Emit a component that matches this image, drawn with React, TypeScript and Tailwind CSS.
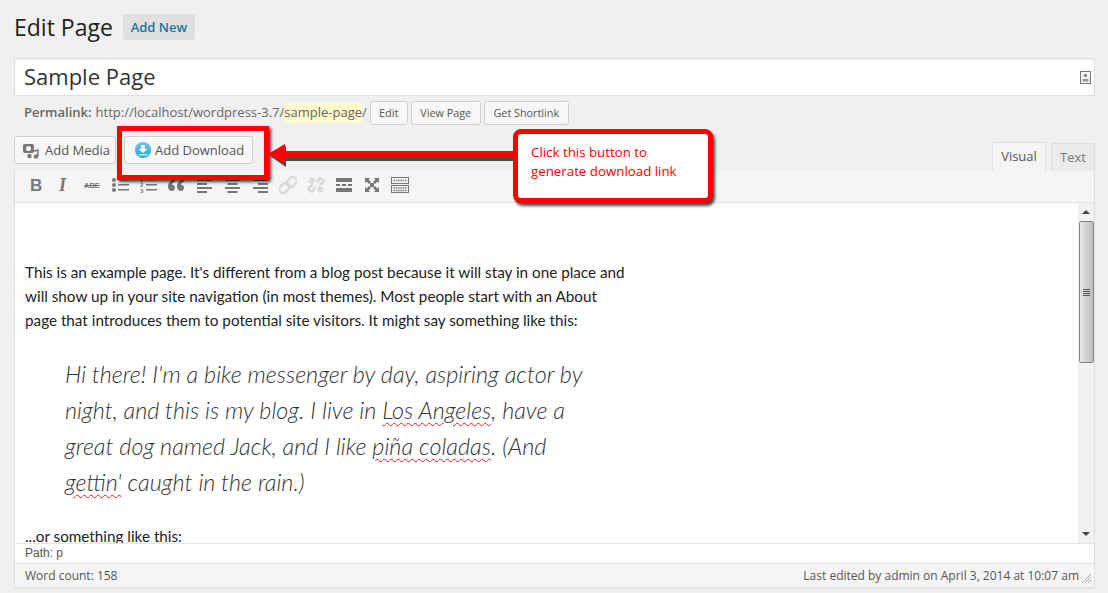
const ui = "font-['Open_Sans',sans-serif]";

function Btn({ children, className = "" }: { children: React.ReactNode; className?: string }) {
  return (
    <div className={`flex items-center border border-[#cfcfcf] rounded-[3px] bg-[#f7f7f7] text-[#555] shadow-[inset_0_1px_0_#fff] ${className}`}>
      {children}
    </div>
  );
}

function Ico({ children, w = 18 }: { children: React.ReactNode; w?: number }) {
  return (
    <svg width={w} height="18" viewBox={`0 0 ${w} 18`} className="shrink-0">
      {children}
    </svg>
  );
}

function Lines({ kind }: { kind: "left" | "center" | "right" }) {
  const r = (y: number, w: number) => {
    const x = kind === "left" ? 2 : kind === "center" ? 2 + (15 - w) / 2 : 17 - w;
    return <rect key={y} x={x} y={y} width={w} height="2" fill="#777" />;
  };
  return <Ico>{r(3, 15)}{r(7, 10)}{r(11, 15)}{r(15, 10)}</Ico>;
}

function Toolbar() {
  const c = "#777";
  return (
    <div className="flex h-[33px] items-center gap-[10px] pb-[2px] pl-[12px] bg-[#f5f5f5] border-b border-[#e2e2e2]">
      <Ico><text x="3" y="15" fontFamily="Liberation Sans" fontWeight="700" fontSize="17" fill={c}>B</text></Ico>
      <Ico><text x="4" y="15" fontFamily="Liberation Serif" fontWeight="700" fontStyle="italic" fontSize="18" fill={c}>I</text></Ico>
      <Ico>
        <text x="1" y="12" fontFamily="Liberation Sans" fontSize="7.5" fontWeight="700" fill={c}>ABE</text>
        <rect x="1" y="9" width="16" height="1" fill={c} />
      </Ico>
      <Ico>
        <circle cx="3" cy="4" r="2" fill={c} /><circle cx="3" cy="9" r="2" fill={c} /><circle cx="3" cy="14" r="2" fill={c} />
        <rect x="7" y="3" width="11" height="1.5" fill={c} /><rect x="7" y="8" width="11" height="1.5" fill={c} /><rect x="7" y="13" width="11" height="1.5" fill={c} />
      </Ico>
      <Ico>
        <text x="1" y="6" fontFamily="Liberation Sans" fontSize="6" fontWeight="700" fill={c}>1</text>
        <text x="1" y="11" fontFamily="Liberation Sans" fontSize="6" fontWeight="700" fill={c}>2</text>
        <text x="1" y="16.5" fontFamily="Liberation Sans" fontSize="6" fontWeight="700" fill={c}>3</text>
        <rect x="7" y="3" width="11" height="1.5" fill={c} /><rect x="7" y="8" width="11" height="1.5" fill={c} /><rect x="7" y="13" width="11" height="1.5" fill={c} />
      </Ico>
      <Ico>
        <path d="M8 3 C3.5 4 1 7 1 10.5 C1 13 2.500 15 4.800 15 C6.800 15 8 13.500 8 11.700 C8 10 6.800 8.800 5 8.800 C5.300 7 6.500 6 8 5.500 Z" fill={c} />
        <path d="M17 3 C12.500 4 10 7 10 10.500 C10 13 11.500 15 13.800 15 C15.800 15 17 13.500 17 11.700 C17 10 15.800 8.800 14 8.800 C14.300 7 15.500 6 17 5.500 Z" fill={c} />
      </Ico>
      <Lines kind="left" />
      <Lines kind="center" />
      <Lines kind="right" />
      <Ico>
        <g fill="none" stroke="#d9d9d9" strokeWidth="2.500">
          <rect x="9" y="0.500" width="7.500" height="11" rx="3.700" transform="rotate(45 12.750 6)" />
          <rect x="1.500" y="6.500" width="7.500" height="11" rx="3.700" transform="rotate(45 5.250 12)" />
        </g>
      </Ico>
      <Ico>
        <g fill="none" stroke="#d9d9d9" strokeLinecap="round">
          <path d="M10.500 5.500 L12.500 2.800 A3 3 0 0 1 16.300 6.600 L13 8.500" strokeWidth="2.500" />
          <path d="M7.500 12.500 L5.500 15.200 A3 3 0 0 1 1.700 11.400 L5 9.500" strokeWidth="2.500" />
          <path d="M2 5 L5 7 M5 2 L7 5 M13 16 L11 13 M16 13 L13 11" strokeWidth="2" />
          <path d="M3 2.500 L6.500 6.500 M15 15.500 L11.500 11.500" strokeWidth="1.500" />
        </g>
      </Ico>
      <Ico>
        <rect x="1" y="2" width="16" height="4" fill={c} />
        <rect x="1" y="8" width="4" height="2" fill={c} /><rect x="7" y="8" width="4" height="2" fill={c} /><rect x="13" y="8" width="4" height="2" fill={c} />
        <rect x="1" y="12" width="16" height="4" fill={c} />
      </Ico>
      <Ico>
        <path d="M2 2 H7 L5.500 3.500 L8 6 L6 8 L3.500 5.500 L2 7 Z M16 2 V7 L14.500 5.500 L12 8 L10 6 L12.500 3.500 L11 2 Z M2 16 V11 L3.500 12.500 L6 10 L8 12 L5.500 14.500 L7 16 Z M16 16 H11 L12.500 14.500 L10 12 L12 10 L14.500 12.500 L16 11 Z" fill={c} />
        <rect x="7" y="7" width="4" height="4" fill={c} />
      </Ico>
      <Ico>
        <rect x="0.500" y="1.500" width="17" height="6" fill="#f5f5f5" stroke={c} />
        <rect x="0.500" y="9.500" width="17" height="7" fill="#f5f5f5" stroke={c} />
        <path d="M2.500 4.500 H15.500 M2.500 12 H15.500 M2.500 14.500 H15.500" stroke={c} strokeWidth="1.500" strokeDasharray="1.500 0.800" />
      </Ico>
    </div>
  );
}

function Scrollbar() {
  return (
    <div className="flex w-[16px] shrink-0 flex-col items-center bg-[#f1f1f1]">
      <div className="flex h-[18px] w-full items-center justify-center">
        <div className="h-0 w-0 border-x-[4px] border-b-[4px] border-x-transparent border-b-[#444]" />
      </div>
      <div className="flex h-[142px] w-[15px] items-center justify-center rounded-[2px] border border-[#888] bg-gradient-to-r from-[#e8e8e8] via-[#d0d0d0] to-[#bbb]">
        <div className="flex w-[7px] flex-col gap-[1px]">
          <div className="h-px bg-[#555]" /><div className="h-px bg-[#555]" /><div className="h-px bg-[#555]" /><div className="h-px bg-[#555]" />
        </div>
      </div>
      <div className="flex-1" />
      <div className="flex h-[18px] w-full items-center justify-center">
        <div className="h-0 w-0 border-x-[4px] border-t-[4px] border-x-transparent border-t-[#444]" />
      </div>
    </div>
  );
}

const sp = "underline decoration-wavy decoration-[#e02020] decoration-1 underline-offset-[3px]";

export default function App() {
  return (
    <div className={`relative h-[593px] w-[1108px] overflow-hidden bg-[#f0f0f0] ${ui}`}>
      <div className="flex h-[58px] items-start pl-[14px] pt-[9px]">
        <h1 className="text-[23px] leading-[36px] text-[#222]">Edit Page</h1>
        <div className="ml-[10px] mt-[5px] flex h-[26px] w-[72px] items-center justify-center rounded-[2px] bg-[#e0e0e0] pt-[2px] text-[13px] font-semibold text-[#21759b]">Add New</div>
      </div>

      <div className="ml-[14px] w-[1081px]">
        <div className="flex h-[38px] items-center justify-between border border-[#dfdfdf] bg-white pl-[9px] pr-[3px] shadow-[inset_0_1px_2px_rgba(0,0,0,0.07)]">
          <span className="pb-[2px] text-[22px] leading-none text-[#333]">Sample Page</span>
          <svg width="11" height="13" viewBox="0 0 11 13">
            <rect x="0.500" y="0.500" width="10" height="12" fill="#f5f5f5" stroke="#777" />
            <circle cx="5.500" cy="4.500" r="1.700" fill="#888" />
            <rect x="2.500" y="8" width="6" height="2.500" fill="#999" />
          </svg>
        </div>

        <div className="mt-[5px] flex h-[24px] items-center pl-[10px] text-[13px] text-[#666]">
          <span className="font-semibold">Permalink:</span>
          <span className="ml-[4px]">http://localhost/wordpress-3.7/</span>
          <span className="bg-[#fffbcc]">sample-page</span>
          <span>/</span>
          <Btn className="ml-[3px] h-[24px] w-[38px] justify-center text-[11px]">Edit</Btn>
          <Btn className="ml-[3px] h-[24px] w-[70px] justify-center text-[10.8px]">View Page</Btn>
          <Btn className="ml-[3px] h-[24px] w-[85px] justify-center text-[10.8px]">Get Shortlink</Btn>
        </div>

        <div className="mt-[11px] flex h-[34px] items-start">
          <Btn className="h-[28px] w-[102px] pl-[7px] pt-[2px] text-[13px]">
            <svg width="18" height="16" viewBox="0 0 18 16" className="mr-[5px]">
              <rect x="1" y="1" width="11" height="9" rx="2" fill="#777" />
              <circle cx="6.500" cy="5.500" r="2.500" fill="#f7f7f7" />
              <path d="M9 9 L16 7 V13" fill="none" stroke="#777" strokeWidth="1.500" />
              <circle cx="7.500" cy="13" r="2.200" fill="#777" />
              <circle cx="14" cy="13.500" r="2.200" fill="#777" />
            </svg>
            Add Media
          </Btn>
          <Btn className="ml-[8px] h-[28px] w-[129px] pl-[10px] pt-[1px] text-[13px]">
            <svg width="16" height="16" viewBox="0 0 16 16" className="mr-[4px] mb-[2px]">
              <defs>
                <linearGradient id="dl" x1="0" y1="0" x2="0" y2="1">
                  <stop offset="0" stopColor="#6cc4ee" />
                  <stop offset="1" stopColor="#2ba4e0" />
                </linearGradient>
              </defs>
              <circle cx="8" cy="8" r="8" fill="url(#dl)" />
              <path d="M6 3 H10 V7 H12.500 L8 11 L3.500 7 H6 Z" fill="#f0f9fd" />
              <rect x="3.500" y="12" width="9" height="1.500" fill="#cfeaf8" />
            </svg>
            Add Download
          </Btn>
          <div className="ml-auto mt-[6px] flex items-end gap-[5px] text-[13px]">
            <div className="flex h-[29px] w-[54px] items-center justify-center border border-b-0 border-[#dfdfdf] bg-[#f5f5f5] text-[#555]">Visual</div>
            <div className="flex h-[28px] w-[44px] items-center justify-center border border-b-0 border-[#dfdfdf] bg-[#ebebeb] text-[#777]">Text</div>
          </div>
        </div>

        <div className="border border-t-0 border-[#dfdfdf] shadow-[0_1px_1px_rgba(0,0,0,0.04)]">
          <Toolbar />
          <div className="flex h-[340px] bg-white">
            <div className="flex-1 overflow-hidden pl-[10px] pt-[57px] font-['Lato',sans-serif] text-[15.25px] leading-[24px] text-[#222]">
              <p className="whitespace-nowrap">This is an example page. It's different from a blog post because it will stay in one place and</p>
              <p className="whitespace-nowrap">will show up in your site navigation (in most themes). Most people start with an About</p>
              <p className="whitespace-nowrap">page that introduces them to potential site visitors. It might say something like this:</p>
              <blockquote className="mt-[24px] pl-[40px] text-[23.4px] font-light italic leading-[36px] text-[#333]">
                <div className="whitespace-nowrap">Hi there! I'm a bike messenger by day, aspiring actor by</div>
                <div className="whitespace-nowrap">night, and this is my blog. I live in <span className={sp}>Los Angeles</span>, have a</div>
                <div className="whitespace-nowrap">great dog named Jack, and I like <span className={sp}>piña coladas</span>. (And</div>
                <div className="whitespace-nowrap"><span className={sp}>gettin'</span> caught in the rain.)</div>
              </blockquote>
              <p className="mt-[24px] whitespace-nowrap">...or something like this:</p>
            </div>
            <Scrollbar />
          </div>
          <div className="flex h-[20px] items-center border-t border-[#e6e6e6] bg-white pb-[2px] pl-[10px] font-['Liberation_Sans',sans-serif] text-[12px] text-[#555]">Path: p</div>
          <div className="flex h-[24px] items-center justify-between border-t border-[#dfdfdf] bg-[#f5f5f5] pl-[10px] pr-[2px] text-[12px] text-[#555]">
            <span>Word count: 158</span>
            <div className="flex items-center gap-[2px]">
              <span>Last edited by admin on April 3, 2014 at 10:07 am</span>
              <svg width="11" height="11" viewBox="0 0 11 11" className="mt-[5px]">
                <path d="M1 10 L10 1 M4 10 L10 4 M7 10 L10 7" stroke="#aaa" strokeWidth="1" />
              </svg>
            </div>
          </div>
        </div>
      </div>

      {/* annotations over the page */}
      <div className="absolute left-[117px] top-[126px] h-[54px] w-[152px] border-[5px] border-[#ff0000] shadow-[2px_2px_3px_rgba(0,0,0,0.75)]" />
      <svg className="absolute left-[266px] top-[140px]" width="256" height="30" viewBox="0 0 256 30">
        <path d="M3 14 L19 4 L19 11 L250 11 Q252 14.500 250 19 L19 19 L19 25 Z" fill="#111" opacity="0.75" transform="translate(1 2)" />
        <path d="M2 14 L19 4 L19 11 L252 11 L252 18 L19 18 L19 24 Z" fill="#ff0000" />
      </svg>
      <div className="absolute left-[513px] top-[129px] h-[74px] w-[200px] rounded-[8px] border-[5px] border-[#ff0000] bg-white pl-[13px] pt-[9px] text-[13.3px] leading-[19px] text-[#ff0000] shadow-[2px_3px_3px_rgba(0,0,0,0.7)]">
        <div>Click this button to<br />generate download link</div>
      </div>
    </div>
  );
}
